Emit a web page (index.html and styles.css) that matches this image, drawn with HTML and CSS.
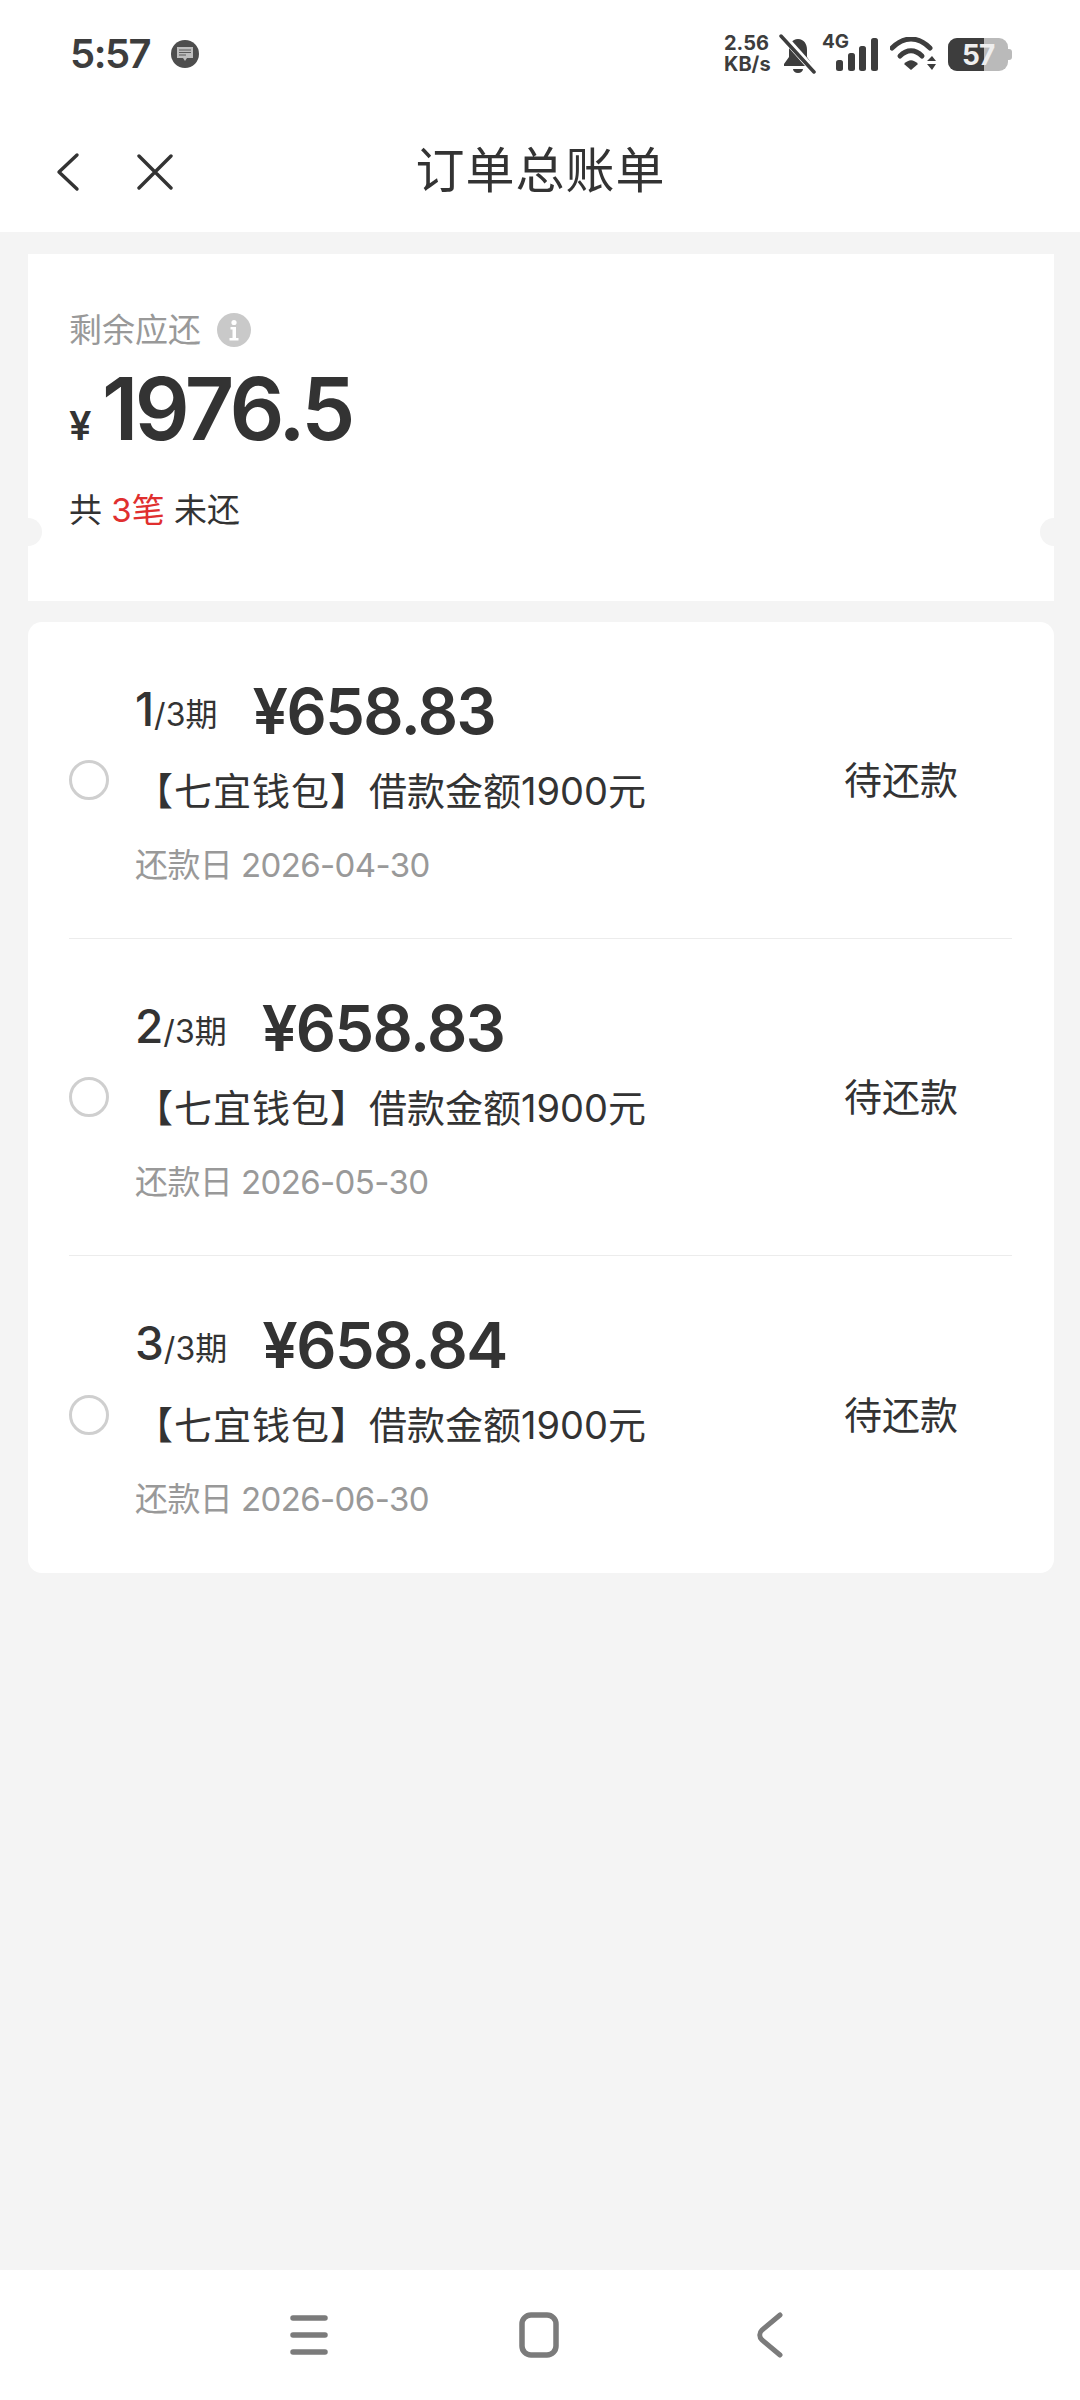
FILE: index.html
```html
<!DOCTYPE html>
<html lang="zh-CN">
<head>
    <meta charset="UTF-8">
    <meta name="viewport" content="width=device-width, initial-scale=1.0">
    <title>订单总账单</title>
    <link rel="stylesheet" href="styles.css">
</head>
<body>
    <!-- Status bar -->
    <div class="status-bar">
        <div class="status-left">
            <span class="clock">5:57</span>
            <svg class="msg-icon" viewBox="0 0 28 28">
                <circle cx="14" cy="14" r="14" fill="#4d4d4d"/>
                <path d="M6 7h16v11h-6l-2 3-2-3H6z" fill="#bdbdbd"/>
                <path d="M8 10h12M8 12.500h12M8 15h7" stroke="#5a5a5a" stroke-width="1.2"/>
            </svg>
        </div>
        <div class="status-right">
            <div class="speed">2.56<br>KB/s</div>
            <svg class="bell" viewBox="0 0 38 40">
                <path d="M19 5c-6 0-9 5-9 11v7l-5 7v2h28v-2l-5-7v-7c0-6-3-11-9-11z" fill="#3d3d3d"/>
                <path d="M14 35h10c0 2-2 4-5 4s-5-2-5-4z" fill="#3d3d3d"/>
                <path d="M3 1l33 37" stroke="#fff" stroke-width="7"/>
                <path d="M2 2l33 36" stroke="#3d3d3d" stroke-width="3.500" stroke-linecap="round"/>
            </svg>
            <div class="signal">
                <span class="net">4G</span>
                <svg viewBox="0 0 42 34" class="bars">
                    <rect x="0" y="22" width="7" height="11" rx="2.500"/>
                    <rect x="12" y="15" width="7" height="18" rx="2.500"/>
                    <rect x="23" y="8" width="7" height="25" rx="2.500"/>
                    <rect x="35" y="0" width="7" height="33" rx="2.500"/>
                </svg>
            </div>
            <svg class="wifi" viewBox="0 0 46 34">
                <path d="M2 11C14-1 28-1 40 11" fill="none" stroke="#3d3d3d" stroke-width="5" stroke-linecap="round"/>
                <path d="M10 19c7-7 15-7 22 0" fill="none" stroke="#3d3d3d" stroke-width="5" stroke-linecap="round"/>
                <path d="M14 27c5-5 9-5 14 0l-7 6z" fill="#3d3d3d"/>
                <path d="M37 24l5-5 4 5zM37 27h9l-4 6z" fill="#3d3d3d"/>
            </svg>
            <div class="battery">
                <div class="battery-fill"></div>
                <span class="battery-text">57</span>
                <span class="battery-cap"></span>
            </div>
        </div>
    </div>

    <!-- Title bar -->
    <div class="title-bar">
        <svg class="back-icon" viewBox="0 0 24 40">
            <path d="M21 3L3 20l18 17" fill="none" stroke="#333" stroke-width="3.400" stroke-linecap="round" stroke-linejoin="round"/>
        </svg>
        <svg class="close-icon" viewBox="0 0 36 36">
            <path d="M2 2l32 32M34 2L2 34" fill="none" stroke="#333" stroke-width="3.400" stroke-linecap="round"/>
        </svg>
        <h1 class="title">订单总账单</h1>
    </div>

    <div class="content">
        <!-- Summary card -->
        <div class="summary-card">
            <div class="summary-label">
                <span>剩余应还</span>
                <svg class="info-icon" viewBox="0 0 34 34">
                    <circle cx="17" cy="17" r="17" fill="#c9c9c9"/>
                    <circle cx="17" cy="9.500" r="2.600" fill="#fff"/>
                    <path d="M13.500 14h5.500v11h2.500v2.500h-9V25H15.500v-8.500h-2z" fill="#fff"/>
                </svg>
            </div>
            <div class="summary-amount"><span class="yen">¥</span><span class="total">1976.5</span></div>
            <div class="summary-count">共 <em>3笔</em> 未还</div>
        </div>

        <!-- Bill list -->
        <div class="bill-card">
            <div class="bill-row">
                <span class="radio"></span>
                <div class="bill-info">
                    <div class="bill-top"><span class="period"><b>1</b>/3期</span><span class="amount">¥658.83</span></div>
                    <div class="bill-name"><span class="bill-shop">【七宜钱包】</span>借款金额1900元</div>
                    <div class="bill-date">还款日 2026-04-30</div>
                </div>
                <span class="bill-status">待还款</span>
            </div>
            <div class="bill-row">
                <span class="radio"></span>
                <div class="bill-info">
                    <div class="bill-top"><span class="period"><b>2</b>/3期</span><span class="amount">¥658.83</span></div>
                    <div class="bill-name"><span class="bill-shop">【七宜钱包】</span>借款金额1900元</div>
                    <div class="bill-date">还款日 2026-05-30</div>
                </div>
                <span class="bill-status">待还款</span>
            </div>
            <div class="bill-row">
                <span class="radio"></span>
                <div class="bill-info">
                    <div class="bill-top"><span class="period"><b>3</b>/3期</span><span class="amount">¥658.84</span></div>
                    <div class="bill-name"><span class="bill-shop">【七宜钱包】</span>借款金额1900元</div>
                    <div class="bill-date">还款日 2026-06-30</div>
                </div>
                <span class="bill-status">待还款</span>
            </div>
        </div>
    </div>

    <!-- Navigation bar -->
    <div class="nav-bar">
        <svg class="nav-menu" viewBox="0 0 38 40">
            <path d="M3 3h32M3 20h32M3 37h32" stroke="#7b7b7b" stroke-width="5.500" stroke-linecap="round"/>
        </svg>
        <svg class="nav-home" viewBox="0 0 40 46">
            <rect x="3" y="3" width="34" height="40" rx="9" fill="none" stroke="#7b7b7b" stroke-width="5.500"/>
        </svg>
        <svg class="nav-back" viewBox="0 0 26 46">
            <path d="M23 3L5 18c-3 3-3 7 0 10l18 15" fill="none" stroke="#7b7b7b" stroke-width="5" stroke-linecap="round"/>
        </svg>
    </div>
</body>
</html>
```

FILE: styles.css
```css
/* Base */
body {
    margin: 0;
    width: 1080px;
    height: 2400px;
    display: flex;
    flex-direction: column;
    background-color: #f4f4f4;
    color: #333;
    font-family: Inter, "Noto Sans CJK SC", sans-serif;
    overflow: hidden;
}

/* Status bar */
.status-bar {
    height: 108px;
    background-color: #fff;
    display: flex;
    justify-content: space-between;
    align-items: center;
    padding: 0 72px 0 70px;
    color: #3d3d3d;
}

.status-left {
    display: flex;
    align-items: center;
    gap: 21px;
}

.clock {
    font-size: 40px;
    font-weight: 600;
    line-height: 1;
    letter-spacing: -1.500px;
}

.msg-icon {
    width: 28px;
    height: 28px;
}

.status-right {
    display: flex;
    align-items: center;
}

.speed {
    font-size: 20px;
    font-weight: 700;
    line-height: 21px;
    width: 55px;
    white-space: nowrap;
}

.bell {
    width: 38px;
    height: 40px;
}

.signal {
    position: relative;
    width: 58px;
    height: 40px;
    margin-left: 3px;
}

.net {
    position: absolute;
    left: 2px;
    top: -2px;
    font-size: 19px;
    font-weight: 700;
    line-height: 1;
}

.bars {
    position: absolute;
    right: 0;
    bottom: 2px;
    width: 42px;
    height: 34px;
    fill: #3d3d3d;
}

.wifi {
    width: 46px;
    height: 34px;
    margin-left: 12px;
}

.battery {
    position: relative;
    width: 60px;
    height: 33px;
    margin-left: 12px;
    background-color: #bababa;
    border-radius: 9px;
}

.battery-fill {
    width: 36px;
    height: 100%;
    background-color: #3d3d3d;
    border-radius: 9px 0 0 9px;
}

.battery-text {
    position: absolute;
    left: 14px;
    top: 2px;
    color: #eee;
    font-size: 28px;
    font-weight: 700;
    line-height: 30px;
    letter-spacing: -1px;
}

.battery-cap {
    position: absolute;
    right: -4px;
    top: 11px;
    width: 4px;
    height: 11px;
    background-color: #bababa;
    border-radius: 0 3px 3px 0;
}

/* Title bar */
.title-bar {
    position: relative;
    height: 124px;
    background-color: #fff;
    display: flex;
    align-items: center;
    justify-content: center;
}

.back-icon {
    position: absolute;
    left: 56px;
    top: 44px;
    width: 24px;
    height: 40px;
}

.close-icon {
    position: absolute;
    left: 137px;
    top: 46px;
    width: 36px;
    height: 36px;
}

.title {
    margin: 2px 0 0 1px;
    font-size: 49px;
    font-weight: 400;
    line-height: 60px;
    letter-spacing: 1px;
}

/* Page content */
.content {
    flex: 1;
    padding: 22px 26px 0 28px;
    display: flex;
    flex-direction: column;
    gap: 21px;
}

/* Summary card, with the two ticket notches */
.summary-card {
    position: relative;
    height: 347px;
    box-sizing: border-box;
    padding: 54px 41px 0;
    background-color: #fff;
    overflow: hidden;
}

.summary-card::before,
.summary-card::after {
    content: "";
    position: absolute;
    top: 264px;
    width: 28px;
    height: 28px;
    border-radius: 50%;
    background-color: #f4f4f4;
}

.summary-card::before {
    left: -14px;
}

.summary-card::after {
    right: -14px;
}

.summary-label {
    display: flex;
    align-items: center;
    gap: 16px;
    font-size: 33px;
    line-height: 44px;
    color: #999;
}

.info-icon {
    width: 34px;
    height: 34px;
}

.summary-amount {
    display: flex;
    align-items: baseline;
    margin-top: 9px;
    height: 96px;
    line-height: 96px;
}

.yen {
    font-size: 40px;
    font-weight: 600;
    width: 33px;
}

.total {
    font-size: 86px;
    font-weight: 600;
    letter-spacing: -3.500px;
}

.summary-count {
    margin-top: 31px;
    font-size: 33px;
    line-height: 44px;
}

.summary-count em {
    font-style: normal;
    color: #e02f2f;
}

/* Bill list */
.bill-card {
    background-color: #fff;
    border-radius: 14px;
    padding: 0 42px 0 41px;
}

.bill-row {
    height: 317px;
    box-sizing: border-box;
    display: flex;
    align-items: center;
    gap: 26px;
    border-bottom: 1px solid #ececec;
}

.bill-row:last-child {
    border-bottom: none;
}

.radio {
    width: 40px;
    height: 40px;
    box-sizing: border-box;
    border: 3px solid #cfcfcf;
    border-radius: 50%;
}

.bill-info {
    flex: 1;
    align-self: flex-start;
    padding-top: 59px;
}

.bill-top {
    display: flex;
    align-items: center;
    gap: 35px;
    height: 60px;
    line-height: 60px;
}

.period {
    padding-top: 2px;
    font-size: 32px;
}

.period b {
    font-size: 46px;
    font-weight: 500;
}

.amount {
    font-size: 63px;
    font-weight: 600;
    letter-spacing: -1.500px;
}

.bill-name {
    margin-top: 25px;
    font-size: 38px;
    line-height: 50px;
}

.bill-shop {
    letter-spacing: 1px;
}

.bill-date {
    margin-top: 27px;
    font-size: 33px;
    line-height: 44px;
    letter-spacing: -0.600px;
    color: #999;
}

.bill-status {
    margin-right: 54px;
    font-size: 38px;
    line-height: 50px;
}

/* Navigation bar */
.nav-bar {
    height: 130px;
    background-color: #fff;
    display: flex;
    align-items: center;
    padding: 0 0 0 290px;
    box-sizing: border-box;
}

.nav-menu {
    width: 38px;
    height: 40px;
}

.nav-home {
    width: 40px;
    height: 46px;
    margin-left: 191px;
}

.nav-back {
    width: 26px;
    height: 46px;
    margin-left: 198px;
}
```
